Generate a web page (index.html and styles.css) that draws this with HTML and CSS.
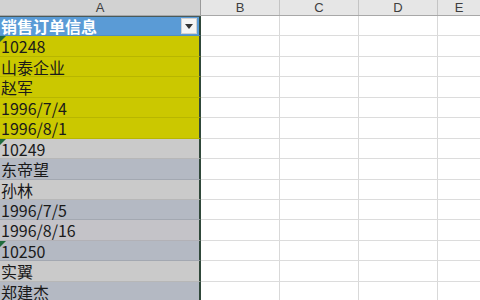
FILE: index.html
```html
<!DOCTYPE html>
<html>
<head>
<meta charset="utf-8">
<link rel="stylesheet" href="styles.css">
</head>
<body>
<div class="sheet">
  <div class="colhead">
    <div class="ch sel">A</div>
    <div class="ch">B</div>
    <div class="ch">C</div>
    <div class="ch">D</div>
    <div class="ch last">E</div>
  </div>
  <div class="row"><div class="a title"><span>销售订单信息</span><span class="filter"><svg width="8" height="5" viewBox="0 0 8 5"><path d="M0 0h8L4 5z" fill="#333"/></svg></span></div><div class="c"></div><div class="c"></div><div class="c"></div><div class="c last"></div></div>
  <div class="row"><div class="a y tri">10248</div><div class="c"></div><div class="c"></div><div class="c"></div><div class="c last"></div></div>
  <div class="row"><div class="a y">山泰企业</div><div class="c"></div><div class="c"></div><div class="c"></div><div class="c last"></div></div>
  <div class="row"><div class="a y">赵军</div><div class="c"></div><div class="c"></div><div class="c"></div><div class="c last"></div></div>
  <div class="row"><div class="a y">1996/7/4</div><div class="c"></div><div class="c"></div><div class="c"></div><div class="c last"></div></div>
  <div class="row"><div class="a y">1996/8/1</div><div class="c"></div><div class="c"></div><div class="c"></div><div class="c last"></div></div>
  <div class="row"><div class="a g1 tri">10249</div><div class="c"></div><div class="c"></div><div class="c"></div><div class="c last"></div></div>
  <div class="row"><div class="a g2">东帝望</div><div class="c"></div><div class="c"></div><div class="c"></div><div class="c last"></div></div>
  <div class="row"><div class="a g1">孙林</div><div class="c"></div><div class="c"></div><div class="c"></div><div class="c last"></div></div>
  <div class="row"><div class="a g2">1996/7/5</div><div class="c"></div><div class="c"></div><div class="c"></div><div class="c last"></div></div>
  <div class="row"><div class="a g3">1996/8/16</div><div class="c"></div><div class="c"></div><div class="c"></div><div class="c last"></div></div>
  <div class="row"><div class="a g2 tri">10250</div><div class="c"></div><div class="c"></div><div class="c"></div><div class="c last"></div></div>
  <div class="row"><div class="a g1">实翼</div><div class="c"></div><div class="c"></div><div class="c"></div><div class="c last"></div></div>
  <div class="row"><div class="a g2">郑建杰</div><div class="c"></div><div class="c"></div><div class="c"></div><div class="c last"></div></div>
</div>
</body>
</html>
```
FILE: styles.css
```css
html, body {
  margin: 0;
  padding: 0;
  background: #ffffff;
  overflow: hidden;
}
.sheet {
  width: 480px;
  height: 300px;
  overflow: hidden;
  font-family: "Noto Sans CJK SC", "Liberation Sans", sans-serif;
}
.colhead {
  display: flex;
  height: 16px;
  box-sizing: border-box;
  background: #e6e6e6;
  border-bottom: 1px solid #a8a8a8;
}
.ch {
  box-sizing: border-box;
  border-right: 1px solid #c4c4c4;
  font-family: "Liberation Sans", sans-serif;
  font-size: 13px;
  line-height: 15px;
  color: #3e3e3e;
  text-align: center;
}
.ch.sel {
  background: #d2d2d2;
  border-right: 1px solid #9a9a9a;
}
.ch, .c { flex: 0 0 auto; }
.ch:nth-child(1), .a { width: 201px; }
.ch:nth-child(2), .row .c:nth-child(2) { width: 79px; }
.ch:nth-child(3), .row .c:nth-child(3) { width: 79px; }
.ch:nth-child(4), .row .c:nth-child(4) { width: 79px; }
.ch.last, .c.last { flex: 1 1 auto; border-right: none; }
.row {
  display: flex;
  height: 20.45px;
}
.a {
  box-sizing: border-box;
  flex: 0 0 auto;
  position: relative;
  border-right: 2px solid #30483a;
  border-bottom: 1px solid rgba(0, 0, 0, 0.09);
  font-size: 16px;
  line-height: 17px;
  padding-left: 1px;
  padding-top: 2px;
  color: #1a1a1a;
  white-space: nowrap;
}
.c {
  box-sizing: border-box;
  border-right: 1px solid #d9d9d9;
  border-bottom: 1px solid #dcdcdc;
}
.title {
  background: #5a9bd6;
  color: #ffffff;
  font-weight: bold;
  display: flex;
  justify-content: space-between;
  align-items: center;
  padding-top: 0;
  padding-right: 2px;
  border-top: 1px solid #4a5a5a;
}
.filter {
  width: 16px;
  height: 16px;
  box-sizing: border-box;
  background: #f4f4f4;
  border: 1px solid #d0d0d0;
  display: flex;
  align-items: center;
  justify-content: center;
}
.y { background: #cbc800; }
.g1 { background: #cacaca; }
.g2 { background: #b4b9c3; }
.g3 { background: #c4c3c8; }
.tri::before {
  content: "";
  position: absolute;
  left: 0;
  top: 0;
  border-top: 6px solid #1f6b3c;
  border-right: 6px solid transparent;
}
```
